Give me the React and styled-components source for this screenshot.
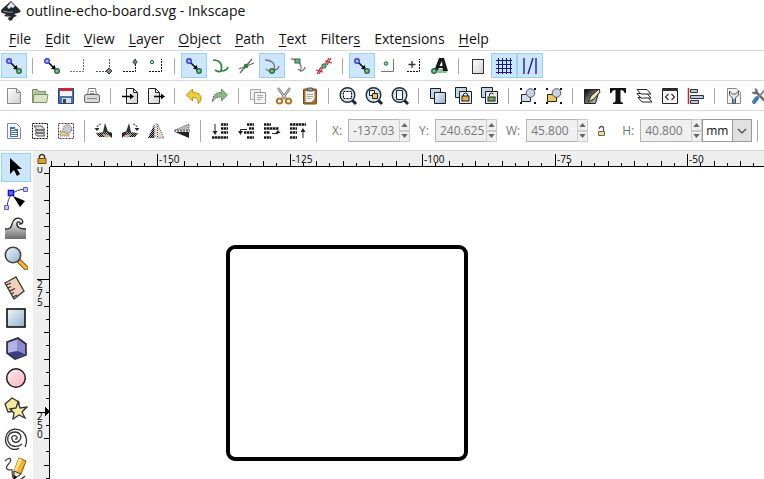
import React from "react";
import styled, { createGlobalStyle } from "styled-components";

const GRAY = "#555";
const GREEN = "#2f7d3b";

/* ---------- icons ---------- */

const Node = ({ x, y, blue }) => (
  <circle cx={x} cy={y} r="2.3" fill={blue ? "#b9b9ff" : "#7fc48a"} stroke={blue ? "#3a3ae0" : "#2c6b4c"} strokeWidth="1.4" />
);

const SnapNodes = () => (
  <>
    <path d="M7 7l5 5" stroke="#000" strokeWidth="1.6" />
    <path d="M14 14l-5-1.2 3.8-3.8z" fill="#000" />
    <Node x={5} y={5} blue />
    <Node x={15} y={15} />
  </>
);

const Dots = ({ d, color = GRAY }) => (
  <path d={d} fill="none" stroke={color} strokeDasharray="2 1" />
);

const Clones = () => (
  <>
    <path d="M1.5 1.5h11v10h-11z" fill="#c6d5e2" stroke="#16202c" />
    <path d="M5.5 5.5h12v12h-12z" fill="#e4ecf2" stroke="#16202c" />
  </>
);

const Magnifier = ({ children }) => (
  <>
    <path d="M14 14l4 4" stroke="#1c2230" strokeWidth="3" />
    <circle cx="9.5" cy="9" r="7.3" fill="#d3e2f0" stroke="#252a33" strokeWidth="1.4" />
    {children}
  </>
);

const GroupIcon = ({ color }) => (
  <>
    <path d="M3.5 8.5h9v7h-9z" fill={color} stroke="#222" />
    <circle cx="12.5" cy="7" r="4.3" fill="#c5d5e5" stroke="#556" />
    <path d="M2 2h2v2H2zM16 2h2v2h-2zM2 16h2v2H2zM16 16h2v2h-2z" fill="#111" />
  </>
);

const Hatch = ({ d }) => (
  <>
    <path d={d} fill="none" stroke="#999" strokeWidth="3" />
    <path d={d} fill="none" stroke="#111" strokeWidth="2" strokeDasharray="2 1" />
  </>
);

const Rotated = () => (
  <>
    <path d="M9 11L11 2l3 9z" fill="#333" />
    <path d="M2 12l9-1 7 1-3 4H5z" fill="url(#hatchFill)" />
    <path d="M8 13l9 1-4 3z" fill="#cbb98c" />
    <path d="M13 10l5 2v5l-3-3z" fill="#222" />
    <path d="M3 9V6q1-3 5-3" fill="none" stroke="#222" strokeDasharray="2 1" />
    <path d="M.5 7h5L3 10z" fill="#222" />
  </>
);

const icons = {
  snap: <SnapNodes />,
  bbox: <Dots d="M2 15.5H15.5V2" color="#777" />,
  bboxCorner: (
    <>
      <Dots d="M2 15.5H15.5V2" />
      <path d="M15 12l3 3-3 3-3-3z" fill="#79907b" stroke="#333" />
    </>
  ),
  bboxMid: (
    <>
      <Dots d="M3 15.5H15.5V3" color="#111" />
      <path d="M15 3.5l2.2 2.5-2.2 2.5L12.8 6z" fill="#698c70" stroke="#333" />
    </>
  ),
  bboxCenter: (
    <>
      <Dots d="M3 15.5H15.5V3" color="#111" />
      <circle cx="6" cy="6" r="1.7" fill="#b8d8bd" stroke="#2d6651" />
    </>
  ),
  path: <path d="M3 4c6 0 10 3 8 11M5 14c3 2 5 2 6 1 3 0 6-1 7-4" fill="none" stroke={GREEN} strokeWidth="1.7" />,
  intersect: (
    <>
      <path d="M3 13L18 7M4 17L16 3" stroke="#666" strokeWidth="1.3" />
      <circle cx="10" cy="10" r="2.3" fill={GREEN} />
    </>
  ),
  cusp: (
    <>
      <path d="M3 4c7 0 11 4 9 10M4 13q3 3 6 2M12 14q4 0 5-4" fill="none" stroke="#777" strokeWidth="1.3" />
      <Node x={10} y={15} />
    </>
  ),
  smooth: (
    <>
      <path d="M3 3q8 0 10 7c1 4-2 5-3 3M12 15q4 0 5-4" fill="none" stroke="#777" strokeWidth="1.3" />
      <rect x="7" y="3" width="5" height="4" fill="#69b57a" stroke="#2c6b4c" />
    </>
  ),
  lineMid: (
    <>
      <path d="M3 18l4-7M5 18l4-7M2 14l7 2M11 9l4-7M13 9l4-7M11 5l7 2" stroke="#c22735" strokeWidth="1.3" />
      <rect x="8" y="8" width="4" height="4" rx="1" fill="#69b57a" stroke="#2c6b4c" />
    </>
  ),
  objectCenter: (
    <>
      <path d="M3 15.5H15.5V3" fill="none" stroke="#777" />
      <circle cx="8" cy="7.5" r="1.8" fill="#8ed196" stroke="#2c6b4c" />
    </>
  ),
  rotation: (
    <>
      <Dots d="M3 15.5H15.5V3" color="#111" />
      <path d="M8 5v7M4.5 8.5h7" stroke="#333" strokeWidth="1.3" />
    </>
  ),
  textAnchor: (
    <>
      <path d="M3 15h14" stroke="#8bc796" strokeWidth="4" />
      <path d="M9 2h5l4 13h-5l-.5-3H9l-2 3H4zM12 5L9.500 10h3z" fill="#16181b" fillRule="evenodd" />
      <Node x={4} y={15} />
    </>
  ),
  pageBorder: <rect x="4.5" y="3.5" width="11" height="14" fill="url(#gray)" stroke="#333" />,
  grid: <path d="M2 4.5h16M2 8.5h16M2 12.5h16M2 16.5h16M4.5 2v16M8.500 2v16M12.5 2v16M16.5 2v16" stroke="#1515a8" />,
  guides: <path d="M4 2v16M16 2v16M8 18l5-16" stroke="#1b1bb8" strokeWidth="1.4" />,

  newDoc: <path d="M3.5 2.5h9l4 4v11h-13zM12.5 2.5v4h4" fill="url(#gray)" stroke="#888" />,
  open: (
    <>
      <path d="M2.5 16.5v-13h5l1 2h7v11z" fill="#b9c79b" stroke="#7d8d68" />
      <path d="M4 8.5h14l-1.500 8H3z" fill="#dbe4c6" stroke="#7d8d68" />
    </>
  ),
  save: (
    <>
      <path d="M2.5 2.5h15v15h-15z" fill="#4775a8" stroke="#24466f" />
      <path d="M4 2h12v3H4z" fill="#d3222a" />
      <path d="M4 5h12v5H4z" fill="#f4f4f4" />
      <path d="M6 12h9v5H6z" fill="#ddd" />
      <path d="M7 13h3v4H7z" fill="#24466f" />
    </>
  ),
  print: (
    <>
      <path d="M5.5 9l1-6.500h7l1 6.500" fill="#fff" stroke="#777" />
      <rect x="2.5" y="8.5" width="15" height="8" rx="1.5" fill="#d9d9d6" stroke="#666" />
      <path d="M5 12.5h10M8 5.5h4M7.500 7.5h5" stroke="#888" />
    </>
  ),
  importDoc: (
    <>
      <path d="M6.5 2.5h7l4 4v11h-11zM13.5 2.5v4h4" fill="url(#gray)" stroke="#222" />
      <path d="M2 10.5h9" stroke="#000" strokeWidth="1.5" />
      <path d="M10 7.5l4 3-4 3z" />
    </>
  ),
  exportDoc: (
    <>
      <path d="M2.5 2.5h7l4 4v11h-11zM9.500 2.5v4h4" fill="url(#gray)" stroke="#222" />
      <path d="M8 10.5h8" stroke="#000" strokeWidth="1.5" />
      <path d="M15 7.5l4 3-4 3z" />
    </>
  ),
  undo: <path d="M2.5 9l6-6v3.500c6-.5 9 3 8.500 6.500-.3 2-1.500 3.500-3 4.500 1-4-1-6-5.500-6v3.500z" fill="#f0ce35" stroke="#b69218" />,
  redo: <path d="M17.5 9l-6-6v3.500c-6-.5-9 3-9 9.500 2-4 4-5 9-5v4z" fill="#8eb28b" stroke="#4b8050" strokeDasharray="2 1" />,
  copy: (
    <>
      <path d="M2.5 3.5h10v10h-10z" fill="#eee" stroke="#aaa" />
      <path d="M6.5 6.5h11v11h-11z" fill="#f4f4f4" stroke="#999" />
      <path d="M9 9.500h6M9 11.5h6M9 13.5h4" stroke="#aaa" />
    </>
  ),
  cut: (
    <>
      <path d="M4 2l8 11M16 2L8 13" stroke="#777" strokeWidth="2.6" />
      <path d="M4 2l8 11M16 2L8 13" stroke="#ddd" />
      <circle cx="5.5" cy="15" r="2.600" fill="#fff" stroke="#bd731b" strokeWidth="2" />
      <circle cx="14.5" cy="15" r="2.600" fill="#fff" stroke="#bd731b" strokeWidth="2" />
    </>
  ),
  paste: (
    <>
      <rect x="3.5" y="3" width="13" height="15" rx="1" fill="#a9722a" stroke="#6e4a17" />
      <path d="M5.5 5h9v8l-3 3h-6z" fill="#f2f2ee" />
      <path d="M7.5 2h5v3h-5z" fill="#999" stroke="#555" />
      <path d="M7 8.5h6M7 10.5h6M7 12.5h4" stroke="#aaa" />
    </>
  ),
  zoomSel: (
    <Magnifier>
      <rect x="5.5" y="5.5" width="8" height="7" fill="#fff" stroke="#000" strokeDasharray="2 1" />
    </Magnifier>
  ),
  zoomDraw: (
    <Magnifier>
      <path d="M5.5 4.5h5v5h-5z" fill="#fff" stroke="#222" />
      <path d="M8.5 7.5h5v5h-5z" fill="#f2c464" stroke="#222" />
    </Magnifier>
  ),
  zoomPage: (
    <Magnifier>
      <path d="M6.5 4.5h6v9h-6z" fill="#fff" stroke="#222" />
    </Magnifier>
  ),
  duplicate: (
    <>
      <path d="M2.5 2.5h10v10h-10z" fill="#c3d3e0" stroke="#16202c" />
      <path d="M6.5 6.5h11v11h-11z" fill="url(#blue)" stroke="#16202c" />
    </>
  ),
  clone: (
    <>
      <Clones />
      <rect x="8" y="10" width="7" height="5" fill="#e8b23c" stroke="#222" />
      <path d="M9.5 10V8q2-2 4 0v2" fill="none" stroke="#222" />
    </>
  ),
  unlink: (
    <>
      <Clones />
      <rect x="8" y="11" width="7" height="4" fill="#77a85b" stroke="#222" />
      <path d="M9.5 10V8q2-2 4 0" fill="none" stroke="#222" />
    </>
  ),
  group: <GroupIcon color="#d2deea" />,
  ungroup: <GroupIcon color="#f3c850" />,
  fillStroke: (
    <>
      <path d="M2.5 3.5h15l-4 14h-11z" fill="url(#black)" stroke="#222" />
      <path d="M17 3L9 10l-3 6 6-3 6-7z" fill="#eee3b4" stroke="#222" />
    </>
  ),
  text: <path d="M2 2h16v5h-1.500q-.5-3-4-3v11q0 1.500 2.500 1.500V18H5v-1.500q2.500 0 2.500-1.500V4q-3.500 0-4 3H2z" fill="#111" />,
  layers: (
    <>
      <path d="M4 11.5h10l4 4.500H8z" fill="#fff" stroke="#222" />
      <path d="M3 7.5h10l4 4.500H7z" fill="#fff" stroke="#222" />
      <path d="M3 3.500h10l4 4.500H7z" fill="#fff" stroke="#222" />
    </>
  ),
  xml: (
    <>
      <path d="M2.5 2.5h15v15h-15z" fill="#fff" stroke="#222" />
      <path d="M2 4h16" stroke="#333" strokeWidth="2" />
      <path d="M8.5 8l-3 3 3 3M11.5 8l3 3-3 3" fill="none" stroke="#333" strokeWidth="1.2" />
    </>
  ),
  align: (
    <>
      <path d="M2.5 2v16" stroke="#c22735" strokeWidth="1.5" />
      <path d="M4.5 3.5h7v3h-7zM4.5 9.5h13v3h-13zM4.5 14.5h8v3h-8z" fill="#b8cce0" stroke="#333" />
    </>
  ),
  docProps: (
    <>
      <path d="M3.5 2.5h9l4 4v11h-13z" fill="#f4f4f4" stroke="#888" />
      <path d="M5.5 5v4l3 3v5.500h3V12l3-3V5l-3 3h-3z" fill="#dfe5ea" stroke="#555" />
      <path d="M9 13h2v4H9z" fill="#6f9bcb" />
    </>
  ),
  prefs: (
    <>
      <path d="M5 5l11 11" stroke="#666" strokeWidth="2.6" />
      <path d="M15 4L5 15" stroke="#889" strokeWidth="2" />
      <path d="M7 12l-3 4" stroke="#3f79bd" strokeWidth="4" strokeLinecap="round" />
      <path d="M5 2.5l2 2-2 3-3-1M14 3l3 3" fill="none" stroke="#666" strokeWidth="1.5" />
    </>
  ),

  selectAll: (
    <>
      <path d="M3.5 2.5h9l4 4v11h-13z" fill="#f8f8f8" stroke="#888" />
      <path d="M6 6h5v2h3v8H6z" fill="#3f6fa6" />
      <path d="M7 8.5h4M7 10.5h6M7 12.5h6M7 14.5h6" stroke="#fff" />
    </>
  ),
  selectLayers: (
    <>
      <rect x="2.5" y="2.5" width="15" height="15" fill="none" stroke="#000" strokeDasharray="2 1" />
      <path d="M5 12h8l2 3H7zM5 9h8l2 3H7zM4 5h8l3 4H7z" fill="#ddd" stroke="#555" />
    </>
  ),
  deselect: (
    <>
      <rect x="2.5" y="2.5" width="15" height="15" fill="none" stroke="#6e2f3d" strokeDasharray="2 1" />
      <path d="M4 10h9v5H4z" fill="#dfc88e" stroke="#777" strokeDasharray="1 1" />
      <circle cx="11.5" cy="8" r="4.3" fill="#c6cbd2" stroke="#777" strokeDasharray="2 1" />
    </>
  ),
  rotateLeft: <Rotated />,
  rotateRight: (
    <g transform="matrix(-1 0 0 1 20 0)">
      <Rotated />
    </g>
  ),
  flipH: (
    <>
      <path d="M8.5 3v14H2z" fill="url(#hatchFill)" />
      <path d="M11.5 3v14H18z" fill="#e4d9bb" stroke="#555" strokeDasharray="1 1" />
      <path d="M10 2v16" stroke="#999" strokeDasharray="2 1" />
    </>
  ),
  flipV: (
    <>
      <path d="M17 9V3L3 9z" fill="#bbb" stroke="#555" strokeDasharray="1 1" />
      <path d="M17 11v6L3 11z" fill="#222" />
      <path d="M2 10h16" stroke="#222" strokeDasharray="2 1" />
    </>
  ),
  lower: (
    <>
      <Hatch d="M11 3.5h7M11 7.5h7M11 11.5h7M2 16.5h16" />
      <path d="M5 3v8" stroke="#222" />
      <path d="M2.5 10h5L5 14z" fill="#222" />
    </>
  ),
  lowerOne: (
    <>
      <Hatch d="M11 3.5h7M13 7.5h5M8 11.5h10M11 16.5h7" />
      <path d="M4.5 12V8.500H11" fill="none" stroke="#222" />
      <path d="M2 10h5l-2.500 4z" fill="#222" />
    </>
  ),
  raiseOne: (
    <>
      <Hatch d="M2 3.5h7M2 7.5h15M2 11.5h6M2 16.5h7" />
      <path d="M10 12.5h6V10" fill="none" stroke="#222" />
      <path d="M13.5 12h5L16 9z" fill="#222" />
    </>
  ),
  raise: (
    <>
      <Hatch d="M2 3.5h16M2 7.5h7M2 11.5h7M2 16.5h7" />
      <path d="M15 17v-7" stroke="#222" />
      <path d="M12.5 11h5L15 7z" fill="#222" />
    </>
  ),
};

const tools = [
  ["Select", <path d="M6 2v16l4-4 3 6 3-2-3-5h5z" fill="#000" />],
  ["Edit paths by nodes", (
    <>
      <path d="M3 21C4 9 10 4 21 3" fill="none" stroke="#444" />
      <path d="M4.5 4.5h5v5h-5z" fill="#6d6df5" stroke="#1717d8" strokeWidth="1.6" />
      <path d="M19.5 1.5h4v4h-4zM.5 19.5h4v4h-4z" fill="#c4c4ff" stroke="#5a5ad5" />
      <path d="M9 10l12 5-5 6z" fill="#000" />
    </>
  )],
  ["Tweak", (
    <>
      <path d="M1 13c5 0 6-1 7-5 1-5 5-7 9-5 3 2 2 5-1 5 1-2-2-3-3-1-1 4 3 6 9 6v10H1z" fill="url(#dark)" />
      <path d="M1 13c5 0 6-1 7-5 1-5 5-7 9-5 3 2 2 5-1 5 1-2-2-3-3-1-1 4 3 6 9 6" fill="none" stroke="#222" strokeWidth="1.3" />
    </>
  )],
  ["Zoom", (
    <>
      <path d="M15 15l7 7" stroke="#7d5510" strokeWidth="5" strokeLinecap="round" />
      <path d="M16 16l6 6" stroke="#f5b833" strokeWidth="3" strokeLinecap="round" />
      <circle cx="9" cy="9" r="7.7" fill="url(#blue)" stroke="#444" strokeWidth="1.6" />
    </>
  )],
  ["Measure", (
    <>
      <path d="M1 7L12 1l8 14-10 8z" fill="#f3cfc2" stroke="#443" strokeWidth="1.4" />
      <path d="M2 9l5-2M4 12l3-1.500M6 15l5-2.500M7 18l3-1.500M9 21l4-2" stroke="#332" strokeWidth="1.3" />
    </>
  )],
  ["Rectangle", <rect x="3" y="3" width="18" height="18" fill="url(#blue)" stroke="#111" strokeWidth="1.6" />],
  ["3D box", (
    <>
      <path d="M3 6l11-4 8 6v11l-11 4-8-6z" fill="#8585c7" stroke="#272744" strokeWidth="1.6" />
      <path d="M4 7l9-3v11l-9 2z" fill="#b4b4e4" />
      <path d="M13 4l8 5v9l-8-3z" fill="#8b8bd0" />
      <path d="M4 17l9-2 8 3-10 4z" fill="#3c3c82" />
    </>
  )],
  ["Ellipse", <circle cx="12" cy="12" r="9.3" fill="url(#pink)" stroke="#222" strokeWidth="1.5" />],
  ["Star", (
    <>
      <path d="M1 8l7-6 7 4-1 9-10 1z" fill="#f6e79c" stroke="#333" strokeWidth="1.3" />
      <path d="M14 6l2 6 7-1-5 5 3 6-6-3-6 4 1-6-4-4 6-1z" fill="#f9eca5" stroke="#333" strokeWidth="1.3" />
    </>
  )],
  ["Spiral", (
    <path
      d="M11 13c2 1 3-2 1-3-3-1-5 1-4 3 1 4 5 4 7 2 4-4 1-9-4-9-6 0-8 5-7 9 2 6 9 7 14 3M21 21c3-6 1-12-2-15-6-5-13-3-16 2-3 6-1 12 3 14 3 2 7 2 9 0"
      fill="none"
      stroke="#333"
      strokeWidth="1.3"
    />
  )],
  ["Pencil", (
    <>
      <path d="M1 5c4-4 7-3 5 1-2 3-5 5-3 7s4 0 5 1c1 2-1 6 2 9 3 2 7 1 11-3" fill="none" stroke="#444" strokeWidth="1.3" />
      <path d="M15 2l7 3-5 13-7 5 0-8z" fill="#f5b530" stroke="#7b560d" />
      <path d="M15 2l3 1.500L12 16l-2-1z" fill="#fbe389" />
      <path d="M10 15l7 3-7 5z" fill="#f4e6c5" stroke="#333" />
      <path d="M10 19l3 2-3 2.500z" fill="#000" />
    </>
  )],
];

/* ---------- toolbar data ---------- */

// a trailing "!" marks a toggle that is switched on
const snapGroups = [
  ["snap!"],
  ["snap", "bbox", "bboxCorner", "bboxMid", "bboxCenter"],
  ["snap!", "path", "intersect", "cusp!", "smooth", "lineMid"],
  ["snap!", "objectCenter", "rotation", "textAnchor"],
  ["pageBorder", "grid!", "guides!"],
];

const commandGroups = [
  ["newDoc", "open", "save", "print"],
  ["importDoc", "exportDoc"],
  ["undo", "redo"],
  ["copy", "cut", "paste"],
  ["zoomSel", "zoomDraw", "zoomPage"],
  ["duplicate", "clone", "unlink"],
  ["group", "ungroup"],
  ["fillStroke", "text", "layers", "xml", "align"],
  ["docProps", "prefs"],
];

const selectGroups = [
  ["selectAll", "selectLayers", "deselect"],
  ["rotateLeft", "rotateRight", "flipH", "flipV"],
  ["lower", "lowerOne", "raiseOne", "raise"],
];

// [before, mnemonic, after]
const menus = [
  ["", "F", "ile"],
  ["", "E", "dit"],
  ["", "V", "iew"],
  ["", "L", "ayer"],
  ["", "O", "bject"],
  ["", "P", "ath"],
  ["", "T", "ext"],
  ["Filter", "s", ""],
  ["Exte", "n", "sions"],
  ["", "H", "elp"],
];

/* ---------- components ---------- */

function ToolGroups({ groups, tall }) {
  return groups.map((group, i) => (
    <React.Fragment key={i}>
      {i > 0 && <Separator $tall={tall} />}
      {group.map((entry) => {
        const name = entry.replace("!", "");
        const active = entry.endsWith("!");
        return (
          <IconButton key={entry} type="button" aria-label={name} aria-pressed={active} $active={active}>
            <Icon viewBox="0 0 20 20">{icons[name]}</Icon>
          </IconButton>
        );
      })}
    </React.Fragment>
  ));
}

function NumberField({ label, value }) {
  const id = `field-${label}`;
  return (
    <Field>
      <FieldLabel htmlFor={id}>{label}:</FieldLabel>
      <FieldInput id={id} defaultValue={value} disabled />
      <Spinner>
        <SpinButton type="button" aria-label={`Increase ${label}`}>
          <SpinArrow viewBox="0 0 8 5"><path d="M0 5l4-5 4 5z" /></SpinArrow>
        </SpinButton>
        <SpinButton type="button" aria-label={`Decrease ${label}`}>
          <SpinArrow viewBox="0 0 8 5"><path d="M0 0l4 5 4-5z" /></SpinArrow>
        </SpinButton>
      </Spinner>
    </Field>
  );
}

const Padlock = ({ open }) => (
  <LockIcon viewBox="0 0 10 12">
    {open ? (
      <>
        <path d="M2.5 4V2.5q2-2 4 0V6" fill="none" stroke="#555" strokeWidth="1.2" />
        <path d="M1.5 6.5h6v4h-6z" fill="#e9df9a" stroke="#666" />
      </>
    ) : (
      <>
        <path d="M2.5 6V3q2.500-3 5 0v3" fill="none" stroke="#3b2c0c" strokeWidth="1.4" />
        <path d="M1 5.500h8v5H1z" fill="#dda32c" stroke="#6d4a0a" />
      </>
    )}
  </LockIcon>
);

// the rulers have a tick every 2.5 mm, and a number every tenth tick
const STEP = 13.25;

function tickLength(i) {
  if (i % 10 === 0) return 12;
  return i % 2 === 0 ? 5 : 3;
}

function HorizontalRuler() {
  const count = Math.ceil((window.innerWidth - 157) / STEP);
  const ticks = [];
  for (let i = -8; i < count; i++) {
    const x = Math.round(107 + i * STEP);
    ticks.push(<rect key={i} x={x} y={15 - tickLength(i)} width="1" height={tickLength(i)} />);
    if (i >= 0 && i % 10 === 0) {
      ticks.push(<text key={`t${i}`} x={x + 2} y="12">{-150 + i * 2.5}</text>);
    }
  }
  return <TopRuler aria-label="Horizontal ruler">{ticks}</TopRuler>;
}

function VerticalRuler() {
  const height = window.innerHeight - 167;
  const ticks = [];
  for (let i = -8; 112 + i * STEP < height; i++) {
    const y = Math.round(112 + i * STEP);
    ticks.push(<rect key={i} x={16 - tickLength(i)} y={y} width={tickLength(i)} height="1" />);
  }
  for (let row = 0; row * 10 * STEP < height; row++) {
    String(300 - row * 25).split("").forEach((digit, n) => {
      const y = Math.round(row * 10 * STEP) - 12 + n * 9;
      if (y > 0 && y < height) {
        ticks.push(<text key={`${row}-${n}`} x="4" y={y}>{digit}</text>);
      }
    });
  }
  return (
    <SideRuler aria-label="Vertical ruler">
      {ticks}
      <path d="M12 240l5 4-5 5z" />
    </SideRuler>
  );
}

function App() {
  return (
    <Window>
      <GlobalStyle />
      <Gradients />
      <TitleBar>
        <Logo viewBox="0 0 20 20">
          <path d="M10 0l9 9q2 2-2 3l-4 1 3 2-3 1-2 3q-2 2-4-1l1-2-5-1 2-2-4-1Q-1 10 1 8z" fill="#23262e" />
          <path d="M10 1l4 4-2 2-2-1-2 2-2-2z" fill="#e3e9f2" />
          <path d="M2 10q6 2 10 1M6 15l4 1" stroke="#8794a8" fill="none" />
        </Logo>
        <Title>outline-echo-board.svg - Inkscape</Title>
      </TitleBar>
      <MenuBar>
        {menus.map(([before, key, after]) => (
          <MenuButton key={before + key + after} type="button">
            {before}<u>{key}</u>{after}
          </MenuButton>
        ))}
      </MenuBar>
      <Toolbar>
        <ToolGroups groups={snapGroups} />
      </Toolbar>
      <Toolbar>
        <ToolGroups groups={commandGroups} />
      </Toolbar>
      <ControlBar>
        <ToolGroups groups={selectGroups} tall />
        <Separator $tall />
        <Fields>
          <NumberField label="X" value="-137.03" />
          <NumberField label="Y" value="240.625" />
          <NumberField label="W" value="45.800" />
          <LockButton type="button" aria-label="Lock proportions"><Padlock open /></LockButton>
          <NumberField label="H" value="40.800" />
        </Fields>
        <UnitBox>
          <UnitSelect aria-label="Unit" defaultValue="mm">
            <option>mm</option>
            <option>px</option>
            <option>in</option>
          </UnitSelect>
          <UnitArrow>
            <Chevron viewBox="0 0 10 6"><path d="M1 1l4 4 4-4" fill="none" stroke="#444" strokeWidth="1.2" /></Chevron>
          </UnitArrow>
        </UnitBox>
        <Separator $tall />
        <WideToggle type="button" aria-label="Scale stroke width" />
      </ControlBar>
      <Workspace>
        <Toolbox>
          {tools.map(([name, art], i) => (
            <ToolButton key={name} type="button" aria-label={name} $active={i === 0}>
              <ToolIcon viewBox="0 0 24 24">{art}</ToolIcon>
            </ToolButton>
          ))}
        </Toolbox>
        <Editor>
          <Corner type="button" aria-label="Lock guides"><Padlock /></Corner>
          <HorizontalRuler />
          <VerticalRuler />
          <Canvas>
            <rect x="178" y="80" width="238" height="212" rx="7" fill="none" stroke="#000" strokeWidth="4" />
          </Canvas>
        </Editor>
      </Workspace>
    </Window>
  );
}

function Gradients() {
  const stops = {
    blue: ["#f2f7fb", "#8fb0cc"],
    gray: ["#ffffff", "#cfcfcb"],
    pink: ["#ffeef0", "#ffb0bb"],
    dark: ["#ffffff", "#6b6b6b"],
    black: ["#000000", "#dddddd"],
  };
  return (
    <Defs aria-hidden="true">
      <defs>
        {Object.entries(stops).map(([id, [from, to]]) => (
          <linearGradient key={id} id={id} x1="0" y1="0" x2={id === "dark" ? "0" : "1"} y2="1">
            <stop offset="0" stopColor={from} />
            <stop offset="1" stopColor={to} />
          </linearGradient>
        ))}
        <pattern id="hatchFill" width="2" height="2" patternUnits="userSpaceOnUse">
          <rect width="2" height="2" fill="#999" />
          <rect width="1" height="1" fill="#000" />
          <rect x="1" y="1" width="1" height="1" fill="#000" />
        </pattern>
      </defs>
    </Defs>
  );
}

export default App;

/* ---------- styles ---------- */

const GlobalStyle = createGlobalStyle`
  * {
    box-sizing: border-box;
  }

  body {
    margin: 0;
    background: #fff;
    color: #111;
    font-family: "Open Sans", "Noto Sans", sans-serif;
  }

  button, input, select {
    margin: 0;
    padding: 0;
    border: 0;
    border-radius: 0;
    background: none;
    color: inherit;
    font-family: inherit;
  }
`;

const Defs = styled.svg`
  display: block;
  width: 0;
  height: 0;
`;

const Window = styled.div`
  display: flex;
  flex-direction: column;
  height: 100vh;
  overflow: hidden;
`;

const TitleBar = styled.header`
  display: flex;
  flex: none;
  align-items: center;
  gap: 5px;
  height: 24px;
  padding: 0 1px 2px;
`;

const Logo = styled.svg`
  width: 20px;
  height: 20px;
`;

const Title = styled.h1`
  margin: 0;
  font-size: 14px;
  font-weight: 400;
  line-height: 20px;
`;

const MenuBar = styled.nav`
  display: flex;
  flex: none;
  align-items: center;
  gap: 14px;
  height: 27px;
  padding: 3px 9px 0;
  border-bottom: 1px solid #d9d9d9;
`;

const MenuButton = styled.button`
  font-size: 14px;
  line-height: 20px;

  u {
    text-underline-offset: 2px;
  }
`;

const Toolbar = styled.div`
  display: flex;
  flex: none;
  align-items: center;
  height: 30px;
  padding-left: 1px;
  overflow: hidden;
  border-bottom: 1px solid #d9d9d9;
`;

const ControlBar = styled(Toolbar)`
  height: 40px;
`;

const IconButton = styled.button`
  display: flex;
  flex: none;
  align-items: center;
  justify-content: center;
  width: 26px;
  height: 25px;
  border: 1px solid ${(p) => (p.$active ? "#99d1f5" : "transparent")};
  background: ${(p) => (p.$active ? "#cce6fb" : "transparent")};
`;

const Icon = styled.svg`
  flex: none;
  width: 20px;
  height: 20px;
`;

const Separator = styled.span`
  flex: none;
  width: 1px;
  height: ${(p) => (p.$tall ? 22 : 16)}px;
  margin: 0 6px 0 5px;
  background: #a8a8a8;
`;

const Fields = styled.div`
  display: flex;
  flex: none;
  align-items: center;
  gap: 9px;
  padding-left: 9px;
`;

const Field = styled.div`
  display: flex;
  align-items: center;
`;

const FieldLabel = styled.label`
  margin-right: 6px;
  color: #777;
  font-size: 12px;
  line-height: 20px;
`;

const FieldInput = styled.input`
  width: 51px;
  height: 23px;
  padding-left: 4px;
  border: 1px solid #b4b4b4;
  border-right: 0;
  background: #f0f0f0;
  color: #777;
  font-size: 12px;
`;

const Spinner = styled.div`
  display: flex;
  flex-direction: column;
  width: 11px;
  height: 23px;
`;

const SpinButton = styled.button`
  display: flex;
  flex: 1;
  align-items: center;
  justify-content: center;
  border: 1px solid #ccc;
  background: #f0f0f0;
`;

const SpinArrow = styled.svg`
  flex: none;
  width: 7px;
  height: 4px;
  fill: #666;
`;

const LockButton = styled.button`
  display: flex;
  padding-right: 6px;
`;

const LockIcon = styled.svg`
  width: 10px;
  height: 12px;
`;

const UnitBox = styled.div`
  display: grid;
  flex: none;
  grid-template-columns: 30px 20px;
  height: 23px;
`;

const UnitSelect = styled.select`
  grid-area: 1 / 1 / 2 / 3;
  padding-left: 3px;
  border: 1px solid #999;
  background: #fff;
  appearance: none;
  font-size: 12px;
`;

const UnitArrow = styled.span`
  display: flex;
  grid-area: 1 / 2;
  align-items: center;
  justify-content: center;
  border: 1px solid #999;
  background: #e1e1e1;
  pointer-events: none;
`;

const Chevron = styled.svg`
  width: 10px;
  height: 6px;
`;

const WideToggle = styled.button`
  flex: none;
  width: 34px;
  height: 35px;
  border: 1px solid #99d1f5;
  background: #cce6fb;
`;

const Workspace = styled.main`
  display: flex;
  flex: 1;
  min-height: 0;
`;

const Toolbox = styled.div`
  display: flex;
  flex: none;
  flex-direction: column;
  gap: 1px;
  width: 33px;
  padding: 2px 1px;
  overflow: hidden;
`;

const ToolButton = styled(IconButton)`
  width: 30px;
  height: 29px;
`;

const ToolIcon = styled.svg`
  flex: none;
  width: 24px;
  height: 24px;
`;

const Editor = styled.div`
  display: grid;
  flex: 1;
  grid-template-columns: 17px 1fr;
  grid-template-rows: 16px 1fr;
  min-width: 0;
`;

const Corner = styled.button`
  display: flex;
  align-items: center;
  justify-content: center;
  background: #eee;
`;

const Ruler = styled.svg`
  display: block;
  width: 100%;
  height: 100%;
  overflow: hidden;
  background: #eee;
  shape-rendering: crispEdges;
  font-size: 10px;
`;

const TopRuler = styled(Ruler)`
  border-bottom: 1px solid #000;
`;

const SideRuler = styled(Ruler)`
  border-right: 1px solid #000;
`;

const Canvas = styled.svg`
  display: block;
  width: 100%;
  height: 100%;
  overflow: hidden;
`;
